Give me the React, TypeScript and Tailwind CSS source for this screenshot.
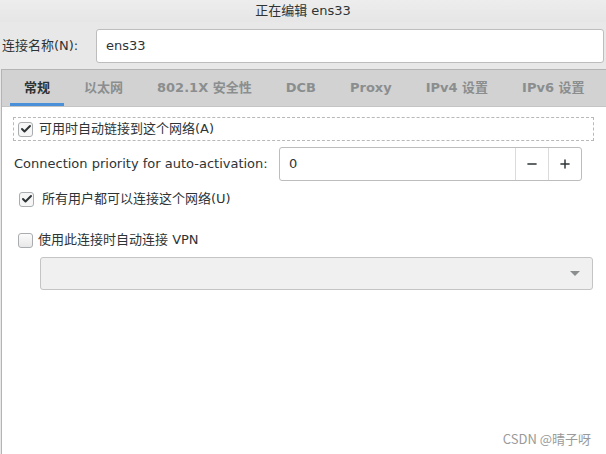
import { Check, Minus, Plus } from 'lucide-react';

const TABS = ['常规', '以太网', '802.1X 安全性', 'DCB', 'Proxy', 'IPv4 设置', 'IPv6 设置'];

function CheckBox({ checked }: { checked: boolean }) {
  return (
    <div
      className={`w-[15px] h-[15px] shrink-0 rounded-[3px] border border-[#a9adb0] flex items-center justify-center ${
        checked ? 'bg-[#f6f6f6]' : 'bg-gradient-to-b from-[#fbfbfb] to-[#e8e8e8]'
      }`}
    >
      {checked && <Check className="w-[12px] h-[12px] text-[#2e3436]" strokeWidth={4} />}
    </div>
  );
}

export default function App() {
  return (
    <div
      className="w-[606px] h-[454px] overflow-hidden bg-[#e8e8e8] flex flex-col text-[13px] text-[#2e3436]"
      style={{ fontFamily: '"DejaVu Sans", "Noto Sans CJK SC", sans-serif' }}
    >
      {/* Title bar */}
      <div className="h-[22px] shrink-0 flex items-center justify-center bg-gradient-to-b from-[#ededed] to-[#e6e6e6] text-[13px] text-[#2e3436]">
        正在编辑 ens33
      </div>

      {/* Connection name */}
      <div className="h-[47px] shrink-0 flex items-start pt-[7px]">
        <div className="w-[96px] pl-[2px] h-[34px] flex items-center">连接名称(N):</div>
        <div className="flex-1 h-[34px] mr-[2px] bg-white border border-[#bdbdbd] rounded-[3px] flex items-center pl-[9px]">
          ens33
        </div>
      </div>

      {/* Notebook */}
      <div className="flex-1 ml-[1px] flex flex-col border-l border-t border-[#b4b4b4]">
        <div className="h-[37px] shrink-0 bg-[#d2d2d2] border-b border-[#c4c4c4] flex items-stretch pl-[8px]">
          {TABS.map((t, i) => (
            <div
              key={t}
              className={`flex items-center font-bold px-[14px] mr-[6px] ${
                i === 0 ? 'text-[#2e3436] border-b-[3px] border-[#4a90d9] pt-[3px]' : 'text-[#8b8e8f]'
              }`}
            >
              {t}
            </div>
          ))}
        </div>

        <div className="flex-1 bg-white flex flex-col">
          <div className="mt-[10px] ml-[11px] w-[581px] h-[24px] border border-dashed border-[#b8b8b8] flex items-center gap-[6px] pl-[4px]">
            <CheckBox checked />
            <span>可用时自动链接到这个网络(A)</span>
          </div>

          <div className="mt-[6px] flex items-center">
            <span className="ml-[12px] w-[265px]">Connection priority for auto-activation:</span>
            <div className="w-[303px] h-[34px] border border-[#bdbdbd] rounded-[3px] flex items-stretch">
              <div className="flex-1 flex items-center pl-[9px]">0</div>
              <div className="w-[33px] border-l border-[#dcdcdc] flex items-center justify-center">
                <Minus className="w-[14px] h-[14px]" strokeWidth={2.5} />
              </div>
              <div className="w-[33px] border-l border-[#dcdcdc] flex items-center justify-center">
                <Plus className="w-[14px] h-[14px]" strokeWidth={2.5} />
              </div>
            </div>
          </div>

          <div className="mt-[10px] ml-[17px] h-[16px] flex items-center gap-[8px]">
            <CheckBox checked />
            <span>所有用户都可以连接这个网络(U)</span>
          </div>

          <div className="mt-[25px] ml-[16px] h-[16px] flex items-center gap-[5px]">
            <CheckBox checked={false} />
            <span>使用此连接时自动连接 VPN</span>
          </div>

          <div className="mt-[9px] ml-[38px] w-[553px] h-[33px] bg-[#f0f0f0] border border-[#c4c4c4] rounded-[3px] flex items-center justify-end pr-[12px]">
            <div className="w-0 h-0 border-l-[5px] border-r-[5px] border-t-[5px] border-l-transparent border-r-transparent border-t-[#8b8e8f]" />
          </div>

          <div className="flex-1" />
          <div
            className="self-end mr-[15px] mb-[6px] text-[13px] text-[#9a9a9a]"
            style={{ fontFamily: '"Noto Sans CJK SC", sans-serif' }}
          >
            CSDN @晴子呀
          </div>
        </div>
      </div>
    </div>
  );
}
